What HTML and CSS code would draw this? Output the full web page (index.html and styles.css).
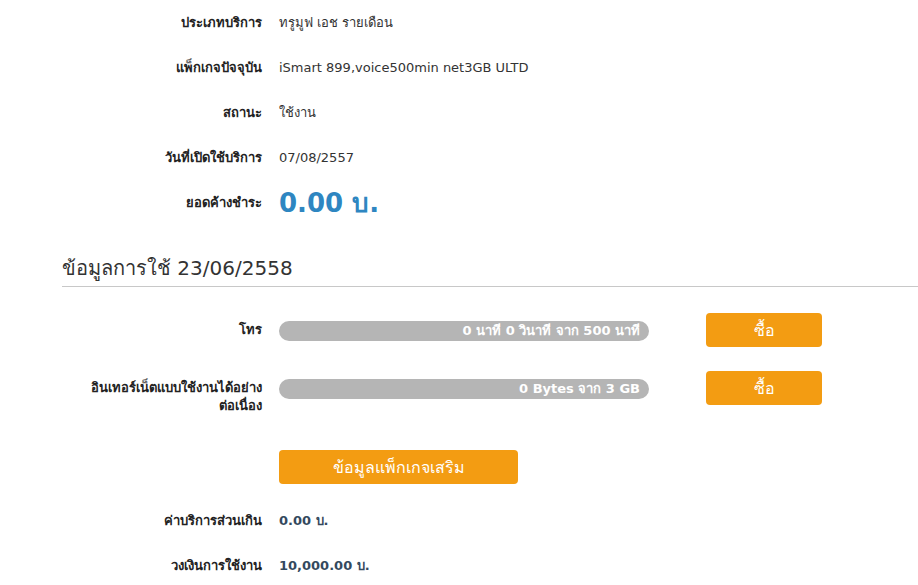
FILE: index.html
```html
<!DOCTYPE html>
<html lang="th">
<head>
    <meta charset="UTF-8">
    <title>ข้อมูลบริการ</title>
    <link rel="stylesheet" href="styles.css">
</head>
<body>

<!-- Service summary -->
<div class="info">
    <div class="row">
        <div class="label">ประเภทบริการ</div>
        <div class="value">ทรูมูฟ เอช รายเดือน</div>
    </div>
    <div class="row">
        <div class="label">แพ็กเกจปัจจุบัน</div>
        <div class="value">iSmart 899,voice500min net3GB ULTD</div>
    </div>
    <div class="row">
        <div class="label">สถานะ</div>
        <div class="value">ใช้งาน</div>
    </div>
    <div class="row">
        <div class="label">วันที่เปิดใช้บริการ</div>
        <div class="value">07/08/2557</div>
    </div>
    <div class="row">
        <div class="label">ยอดค้างชำระ</div>
        <div class="value balance">0.00 บ.</div>
    </div>
</div>

<h2 class="section-title">ข้อมูลการใช้ 23/06/2558</h2>

<!-- Usage bars -->
<div class="usage">
    <div class="usage-row">
        <div class="label">โทร</div>
        <div class="bar"><span>0 นาที 0 วินาที จาก 500 นาที</span></div>
        <button class="btn btn-buy">ซื้อ</button>
    </div>
    <div class="usage-row">
        <div class="label">อินเทอร์เน็ตแบบใช้งานได้อย่าง<br>ต่อเนื่อง</div>
        <div class="bar"><span>0 Bytes จาก 3 GB</span></div>
        <button class="btn btn-buy">ซื้อ</button>
    </div>
    <div class="usage-row extra">
        <div></div>
        <button class="btn btn-extra">ข้อมูลแพ็กเกจเสริม</button>
    </div>
</div>

<div class="info bottom">
    <div class="row">
        <div class="label">ค่าบริการส่วนเกิน</div>
        <div class="value amount">0.00 บ.</div>
    </div>
    <div class="row">
        <div class="label">วงเงินการใช้งาน</div>
        <div class="value amount">10,000.00 บ.</div>
    </div>
</div>

</body>
</html>
```

FILE: styles.css
```css
body {
    margin: 0;
    font-family: Tahoma, "DejaVu Sans", "Noto Sans", sans-serif;
    font-size: 13px;
    color: #333;
    background: #fff;
}

.row {
    display: grid;
    grid-template-columns: 262px 1fr;
    column-gap: 17px;
    align-items: center;
    height: 45px;
}

.label {
    text-align: right;
    font-weight: bold;
    color: #222;
    line-height: 18px;
}

.value {
    color: #333;
}

.balance {
    font-size: 26px;
    font-weight: bold;
    color: #2e86c1;
}

.section-title {
    margin: 27px 0 0 62px;
    padding-bottom: 2px;
    border-bottom: 1px solid #c8c8c8;
    font-weight: normal;
    font-size: 20px;
    color: #333;
}

.usage {
    padding-top: 26px;
}

.usage-row {
    display: grid;
    grid-template-columns: 262px 370px 116px;
    column-gap: 17px;
    align-items: start;
    margin-bottom: 24px;
}

.usage-row .label {
    padding-top: 8px;
}

.usage-row > .btn-buy {
    margin-left: 40px;
}

.bar {
    height: 20px;
    margin-top: 8px;
    border-radius: 10px;
    background: #b5b5b5;
    color: #fff;
    font-weight: bold;
    text-align: right;
    line-height: 20px;
    padding-right: 9px;
}

.btn {
    border: none;
    border-radius: 4px;
    background: #f39c12;
    color: #fff;
    font-family: inherit;
    font-size: 16px;
    height: 34px;
    cursor: pointer;
}

.btn-buy {
    width: 116px;
}

.usage-row.extra {
    margin-top: 35px;
    grid-template-columns: 262px 239px;
}

.btn-extra {
    width: 239px;
}

.bottom {
    margin-top: -10px;
}

.amount {
    font-weight: bold;
    color: #34495e;
}
```
